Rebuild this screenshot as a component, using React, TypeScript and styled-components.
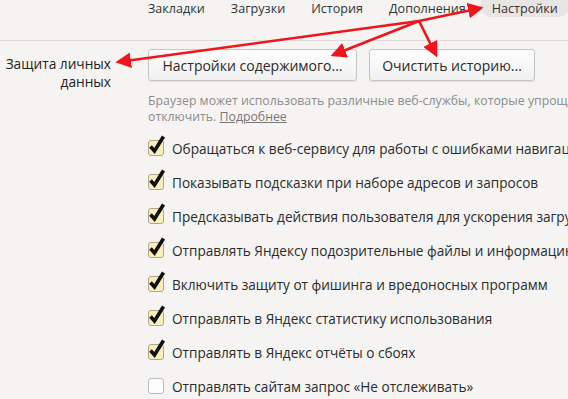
import styled, { createGlobalStyle } from "styled-components";

const GlobalStyle = createGlobalStyle`
  html, body {
    margin: 0;
    padding: 0;
    background: #f5f4f2;
    overflow: hidden;
  }
  body {
    font-family: "Open Sans", "Noto Sans", sans-serif;
    color: #333;
  }
`;

const navItems = ["Закладки", "Загрузки", "История", "Дополнения"];

const options = [
  { label: "Обращаться к веб-сервису для работы с ошибками навигации", checked: true },
  { label: "Показывать подсказки при наборе адресов и запросов", checked: true },
  { label: "Предсказывать действия пользователя для ускорения загрузки страниц", checked: true },
  { label: "Отправлять Яндексу подозрительные файлы и информацию о них", checked: true },
  { label: "Включить защиту от фишинга и вредоносных программ", checked: true },
  { label: "Отправлять в Яндекс статистику использования", checked: true },
  { label: "Отправлять в Яндекс отчёты о сбоях", checked: true },
  { label: "Отправлять сайтам запрос «Не отслеживать»", checked: false },
];

export default function App() {
  return (
    <Page>
      <GlobalStyle />
      <Nav>
        {navItems.map((item) => (
          <NavItem key={item}>{item}</NavItem>
        ))}
        <NavItem $active>Настройки</NavItem>
      </Nav>
      <Section>
        <SectionTitle>
          Защита личных
          <br />
          данных
        </SectionTitle>
        <SectionBody>
          <Buttons>
            <Button $width={209}>Настройки содержимого...</Button>
            <Button $width={166}>Очистить историю...</Button>
          </Buttons>
          <Description>
            Браузер может использовать различные веб-службы, которые упрощают работу в интернете. При желании их можно
            <br />
            отключить. <MoreLink>Подробнее</MoreLink>
          </Description>
          <OptionList>
            {options.map((opt) => (
              <OptionRow key={opt.label}>
                <Box $checked={opt.checked}>
                  {opt.checked && (
                    <svg width="18" height="20" viewBox="0 0 18 20">
                      <path
                        d="M2.5 11.5 L6.5 16 L15.5 1.5"
                        fill="none"
                        stroke="#111"
                        strokeWidth="3.6"
                        strokeLinecap="butt"
                        strokeLinejoin="miter"
                      />
                    </svg>
                  )}
                </Box>
                <span>{opt.label}</span>
              </OptionRow>
            ))}
          </OptionList>
        </SectionBody>
      </Section>
      <Arrows width="568" height="399" viewBox="0 0 568 399">
        <defs>
          <marker id="head" markerWidth="6" markerHeight="6" refX="5" refY="3" orient="auto" markerUnits="strokeWidth">
            <path d="M0 0 L6 3 L0 6 Z" fill="#f2141b" />
          </marker>
        </defs>
        <g stroke="#f2141b" strokeWidth="2.6" fill="none" markerEnd="url(#head)">
          <line x1="419" y1="21" x2="481" y2="8" />
          <line x1="419" y1="21" x2="118" y2="62" />
          <line x1="419" y1="21" x2="333" y2="55" />
          <line x1="419" y1="21" x2="436" y2="55" />
        </g>
      </Arrows>
    </Page>
  );
}

const Page = styled.div`
  position: relative;
  width: 568px;
  height: 399px;
  overflow: hidden;
  white-space: nowrap;
`;

const Nav = styled.div`
  display: flex;
  align-items: flex-start;
  box-sizing: border-box;
  height: 65px;
  margin-top: -24px;
  padding-top: 24px;
  padding-left: 137px;
  border-bottom: 1px solid #dedddb;
`;

const NavItem = styled.div<{ $active?: boolean }>`
  font-size: 12.6px;
  line-height: 17px;
  padding: 0 11px;
  margin-right: 4px;
  color: #333;
  ${(p) =>
    p.$active &&
    `
    background: #e7e6e4;
    border-radius: 0 0 10px 10px;
  `}
`;

const Section = styled.div`
  display: flex;
  gap: 37px;
  padding-top: 8px;
`;

const SectionTitle = styled.div`
  flex-shrink: 0;
  width: 111px;
  text-align: right;
  font-size: 13.7px;
  line-height: 18px;
  padding-top: 6px;
  color: #222;
`;

const SectionBody = styled.div`
  display: flex;
  flex-direction: column;
`;

const Buttons = styled.div`
  display: flex;
  gap: 12px;
`;

const Button = styled.button<{ $width: number }>`
  width: ${(p) => p.$width}px;
  height: 32px;
  padding: 0;
  font-family: "Open Sans", "Noto Sans", sans-serif;
  font-size: 14px;
  color: #2a2a2a;
  background: linear-gradient(#fdfdfd, #f1f1f1);
  border: 1px solid #c6c6c6;
  border-radius: 3px;
  box-shadow: 0 1px 1px rgba(0, 0, 0, 0.08);
`;

const Description = styled.div`
  margin-top: 12px;
  font-size: 12.3px;
  line-height: 16px;
  color: #8c8c8c;
`;

const MoreLink = styled.span`
  color: #777;
  text-decoration: underline;
`;

const OptionList = styled.div`
  display: flex;
  flex-direction: column;
  margin-top: 6px;
`;

const OptionRow = styled.div`
  display: flex;
  align-items: center;
  gap: 8px;
  height: 34px;
  font-size: 13.6px;
  color: #2b2b2b;
`;

const Box = styled.div<{ $checked: boolean }>`
  position: relative;
  width: 14px;
  height: 14px;
  border: 1px solid ${(p) => (p.$checked ? "#b3a687" : "#bcbcbc")};
  border-radius: 3px;
  background: ${(p) => (p.$checked ? "#fbeebd" : "#fdfdfd")};
  flex-shrink: 0;

  svg {
    position: absolute;
    left: -1px;
    top: -6px;
    overflow: visible;
  }
`;

const Arrows = styled.svg`
  position: absolute;
  left: 0;
  top: 0;
  pointer-events: none;
`;
